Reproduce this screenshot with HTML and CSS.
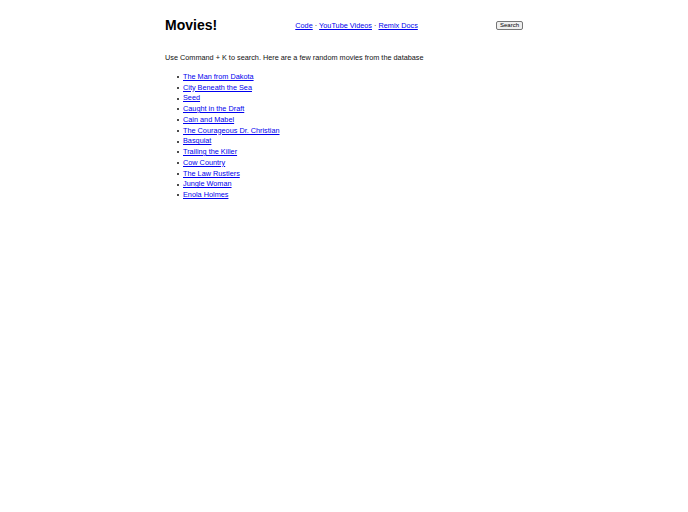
FILE: index.html
```html
<!DOCTYPE html>
<html>
<head>
<meta charset="utf-8">
<link rel="stylesheet" href="styles.css">
</head>
<body>
<div class="container">
  <header class="header">
    <h1 class="title">Movies!</h1>
    <nav class="nav">
      <a href="#">Code</a> · <a href="#">YouTube Videos</a> · <a href="#">Remix Docs</a>
    </nav>
    <button class="search">Search</button>
  </header>
  <p class="intro">Use Command + K to search. Here are a few random movies from the database</p>
  <ul class="movies">
    <li><a href="#">The Man from Dakota</a></li>
    <li><a href="#">City Beneath the Sea</a></li>
    <li><a href="#">Seed</a></li>
    <li><a href="#">Caught in the Draft</a></li>
    <li><a href="#">Cain and Mabel</a></li>
    <li><a href="#">The Courageous Dr. Christian</a></li>
    <li><a href="#">Basquiat</a></li>
    <li><a href="#">Trailing the Killer</a></li>
    <li><a href="#">Cow Country</a></li>
    <li><a href="#">The Law Rustlers</a></li>
    <li><a href="#">Jungle Woman</a></li>
    <li><a href="#">Enola Holmes</a></li>
  </ul>
</div>
</body>
</html>
```
FILE: styles.css
```css
html, body {
  margin: 0;
  padding: 0;
  background: #fff;
}
body {
  font-family: "Liberation Sans", Arial, sans-serif;
  font-size: 7.3px;
  color: #111;
}
.container {
  width: 358px;
  margin: 0 auto;
}
.header {
  display: flex;
  align-items: center;
  justify-content: space-between;
  padding-top: 16px;
}
.title {
  margin: 0;
  font-size: 14px;
  font-weight: 700;
  line-height: 18px;
  color: #000;
  white-space: nowrap;
}
.nav {
  font-size: 7.3px;
  white-space: nowrap;
}
.nav a, .movies a {
  color: #0000ee;
}
.search {
  font-family: "Liberation Sans", Arial, sans-serif;
  font-size: 6px;
  line-height: 7px;
  padding: 0 3px;
  height: 9px;
  background: #efefef;
  border: 1px solid #767676;
  border-radius: 2px;
  color: #000;
}
.intro {
  margin: 19px 0 0;
  line-height: 10.75px;
}
.movies {
  margin: 8px 0 0;
  padding-left: 12px;
  list-style: none;
  line-height: 10.75px;
}
.movies li {
  display: flex;
  align-items: center;
}
.movies li::before {
  content: "";
  width: 2px;
  height: 2px;
  margin-right: 4px;
  background: #111;
  border-radius: 50%;
}
```
